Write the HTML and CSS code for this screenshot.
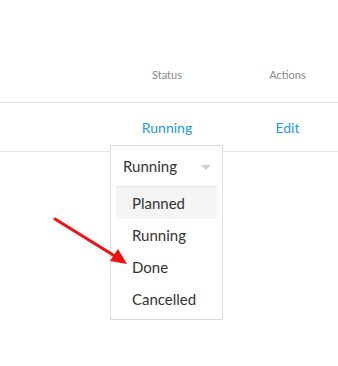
FILE: index.html
```html
<!DOCTYPE html>
<html lang="en">
<head>
    <meta charset="UTF-8">
    <meta name="viewport" content="width=device-width, initial-scale=1.0">
    <title>Status dropdown</title>
    <link rel="stylesheet" href="styles.css">
</head>
<body>
    <div id="table">
        <div class="row head">
            <div class="cell"></div>
            <div class="cell">Status</div>
            <div class="cell">Actions</div>
        </div>
        <div class="row">
            <div class="cell"></div>
            <div class="cell link">Running</div>
            <div class="cell link">Edit</div>
        </div>
    </div>

    <div id="dropdown">
        <div class="selected">
            <span>Running</span>
            <span class="caret"></span>
        </div>
        <ul class="options">
            <li class="active">Planned</li>
            <li>Running</li>
            <li>Done</li>
            <li>Cancelled</li>
        </ul>
    </div>

    <svg id="arrow" width="90" height="60" viewBox="0 0 90 60">
        <line x1="3" y1="3" x2="66" y2="42" stroke="#f01010" stroke-width="3" stroke-linecap="round"/>
        <polygon points="75,48 58,45 66,33" fill="#f01010"/>
    </svg>
</body>
</html>
```

FILE: styles.css
```css
body {
    font-family: 'Lato', 'Open Sans', sans-serif;
    background-color: #ffffff;
    color: #333;
    margin: 0;
    position: relative;
    width: 338px;
    height: 366px;
    overflow: hidden;
}
#table {
    padding-top: 46px;
}
.row {
    display: grid;
    grid-template-columns: 97px 140px 1fr;
    height: 48px;
    align-items: center;
    border-bottom: 1px solid #e2e2e2;
}
.row.head {
    height: 56px;
    align-items: center;
    font-size: 11px;
    color: #888;
}
.cell {
    text-align: center;
}
.link {
    color: #1a9be6;
    font-size: 14px;
}
#dropdown {
    position: absolute;
    top: 145px;
    left: 110px;
    width: 101px;
    height: 173px;
    background: #fff;
    border: 1px solid #dcdcdc;
    padding: 0 5px;
    box-sizing: content-box;
}
#dropdown .selected {
    display: flex;
    justify-content: space-between;
    align-items: center;
    height: 40px;
    padding: 0 6px 0 7px;
    font-size: 15px;
    color: #333;
    border-bottom: 1px solid #e6e6e6;
}
.caret {
    width: 0;
    height: 0;
    border-left: 5px solid transparent;
    border-right: 5px solid transparent;
    border-top: 5px solid #d0d0d0;
    margin-top: 2px;
}
.options {
    list-style-type: none;
    margin: 0;
    padding: 0;
}
.options li {
    height: 32px;
    line-height: 32px;
    padding-left: 16px;
    font-size: 15px;
    color: #333;
}
.options li.active {
    background: #f4f4f4;
}
#arrow {
    position: absolute;
    left: 52px;
    top: 216px;
}
```
